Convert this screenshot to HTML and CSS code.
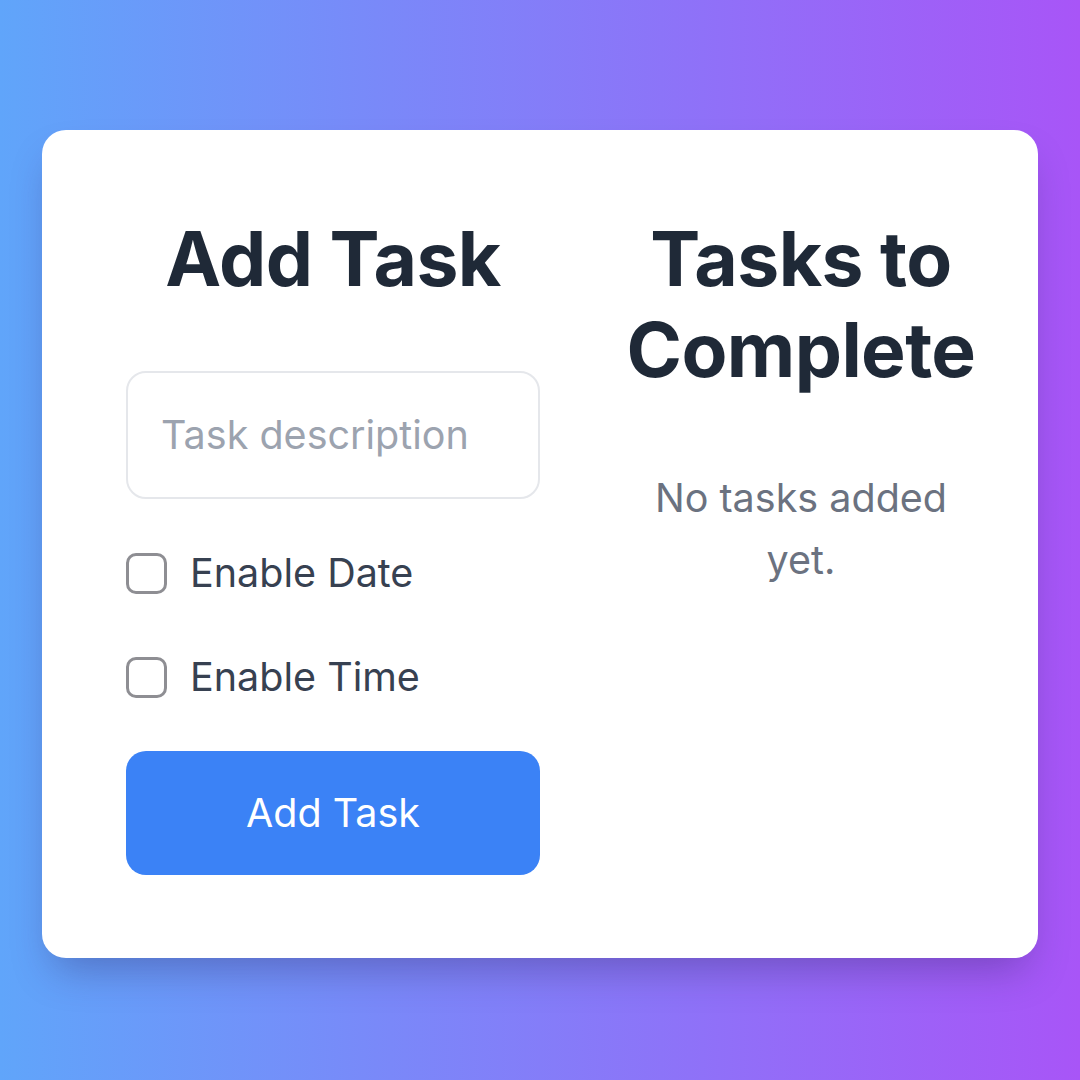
FILE: index.html
```html
<!DOCTYPE html>
<html lang="en">
<head>
<meta charset="utf-8">
<title>Tasks</title>
<link rel="stylesheet" href="styles.css">
</head>
<body>
  <main class="card">
    <section class="col col-add">
      <h1 class="title">Add Task</h1>
      <input class="task-input" type="text" placeholder="Task description">
      <label class="check-row"><input type="checkbox" class="check"><span>Enable Date</span></label>
      <label class="check-row"><input type="checkbox" class="check"><span>Enable Time</span></label>
      <button class="add-btn" type="button">Add Task</button>
    </section>
    <section class="col col-list">
      <h1 class="title">Tasks to Complete</h1>
      <p class="empty">No tasks added yet.</p>
    </section>
  </main>
</body>
</html>
```
FILE: styles.css
```css
* { box-sizing: border-box; }
html, body { margin: 0; padding: 0; }
body {
  width: 1080px;
  height: 1080px;
  padding-top: 8px;
  display: flex;
  align-items: center;
  justify-content: center;
  background: linear-gradient(to right, #60a5fa, #a855f7);
  font-family: Inter, "Noto Sans", "Liberation Sans", sans-serif;
}
.card {
  width: 996px;
  background: #ffffff;
  border-radius: 24px;
  box-shadow: 0 22px 40px -12px rgba(40, 30, 90, 0.35);
  padding: 83px 57px 83px 84px;
  display: grid;
  grid-template-columns: 414px 360px;
  column-gap: 81px;
  align-items: start;
}
.col { display: flex; flex-direction: column; }
.title {
  margin: 0;
  font-size: 75px;
  line-height: 91px;
  font-weight: 700;
  color: #1f2937;
  text-align: center;
  letter-spacing: -0.6px;
}
.col-add .title { margin-bottom: 67px; }
.task-input {
  width: 100%;
  height: 128px;
  border: 2px solid #e5e7eb;
  border-radius: 20px;
  padding: 0 33px;
  font-family: inherit;
  font-size: 39.5px;
  color: #1f2937;
  outline: none;
}
.task-input::placeholder { color: #9ca3af; }
.check-row {
  display: flex;
  align-items: center;
  gap: 23px;
  height: 60px;
  font-size: 39.5px;
  color: #374151;
  margin-top: 44px;
}
.check {
  appearance: none;
  -webkit-appearance: none;
  margin: 0;
  width: 41px;
  height: 41px;
  border: 3px solid #8e8e93;
  border-radius: 10px;
  background: #fff;
  flex: none;
}
.add-btn {
  margin-top: 44px;
  height: 124px;
  width: 100%;
  border: none;
  border-radius: 20px;
  background: #3b82f6;
  color: #ffffff;
  font-family: inherit;
  font-size: 39.5px;
}
.empty {
  margin: 72px 0 0;
  font-size: 39.5px;
  line-height: 62px;
  color: #6b7280;
  text-align: center;
}
```
